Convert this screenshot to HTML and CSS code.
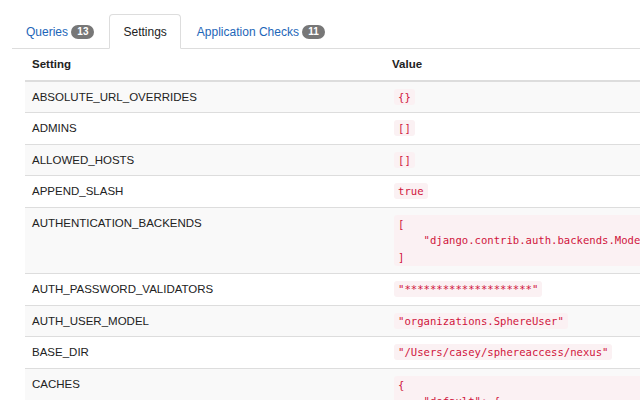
FILE: index.html
```html
<!DOCTYPE html>
<html>
<head>
<meta charset="utf-8">
<link rel="stylesheet" href="styles.css">
</head>
<body>
<div class="page">
  <ul class="tabs">
    <li class="tab first"><a>Queries <span class="badge">13</span></a></li>
    <li class="tab active"><a>Settings</a></li>
    <li class="tab"><a>Application Checks <span class="badge">11</span></a></li>
  </ul>
  <table class="settings">
    <colgroup><col class="c1"><col class="c2"></colgroup>
    <thead>
      <tr><th>Setting</th><th>Value</th></tr>
    </thead>
    <tbody>
      <tr><td>ABSOLUTE_URL_OVERRIDES</td><td><code>{}</code></td></tr>
      <tr><td>ADMINS</td><td><code>[]</code></td></tr>
      <tr><td>ALLOWED_HOSTS</td><td><code>[]</code></td></tr>
      <tr><td>APPEND_SLASH</td><td><code>true</code></td></tr>
      <tr><td>AUTHENTICATION_BACKENDS</td><td><code class="block">[
    "django.contrib.auth.backends.ModelBackend"
]</code></td></tr>
      <tr><td>AUTH_PASSWORD_VALIDATORS</td><td><code>"********************"</code></td></tr>
      <tr><td>AUTH_USER_MODEL</td><td><code>"organizations.SphereUser"</code></td></tr>
      <tr><td>BASE_DIR</td><td><code>"/Users/casey/sphereaccess/nexus"</code></td></tr>
      <tr><td>CACHES</td><td><code class="block">{
    "default": {
        "BACKEND": "django.core.cache.backends.locmem.LocMemCache"
    }
}</code></td></tr>
    </tbody>
  </table>
</div>
</body>
</html>
```

FILE: styles.css
```css
html, body {
  margin: 0;
  padding: 0;
  overflow: hidden;
  background: #fff;
}
body {
  font-family: "Liberation Sans", Arial, sans-serif;
  color: #222;
  width: 640px;
  height: 400px;
}
.page {
  padding: 14px 0 0 12px;
}
.tabs {
  list-style: none;
  margin: 0;
  padding: 0;
  display: flex;
  border-bottom: 1px solid #ddd;
  width: 900px;
}
.tab {
  margin-right: 2px;
  margin-bottom: -1px;
}
.tab a {
  display: block;
  padding: 10px 13px 8px 13px;
  border: 1px solid transparent;
  border-radius: 4px 4px 0 0;
  font-size: 12px;
  line-height: 15px;
  color: #1d66b8;
}
.tab.first a {
  padding-right: 12px;
}
.tab.active a {
  color: #222;
  background: #fff;
  border-color: #ddd #ddd transparent;
}
.badge {
  display: inline-block;
  margin-left: 0;
  padding: 2px 6px;
  border-radius: 8px;
  background: #777;
  color: #fff;
  font-size: 10px;
  font-weight: bold;
  line-height: 10px;
  vertical-align: 1px;
}
.settings {
  margin-left: 13px;
  border-collapse: collapse;
  table-layout: fixed;
  width: 760px;
  font-size: 11.5px;
}
.c1 { width: 360px; }
.c2 { width: 400px; }
.settings th, .settings td {
  text-align: left;
  vertical-align: top;
  padding: 7px 7px;
  line-height: 16.5px;
  border-top: 1px solid #ddd;
}
.settings th {
  font-weight: bold;
  border-top: 0;
  border-bottom: 2px solid #ddd;
  padding-top: 7px;
  padding-bottom: 7px;
}
.settings tbody tr:first-child td {
  border-top: 0;
}
.settings tbody tr:nth-child(odd) {
  background: #f9f9f9;
}
code {
  font-family: "DejaVu Sans Mono", Menlo, monospace;
  font-size: 10.6px;
  color: #d0143c;
  background: #fbf1f3;
  padding: 2px 4px;
  border-radius: 3px;
  margin-left: 2px;
}
code.block {
  display: inline-block;
  white-space: pre;
  padding: 1px 4px;
  line-height: 16.5px;
}
```
